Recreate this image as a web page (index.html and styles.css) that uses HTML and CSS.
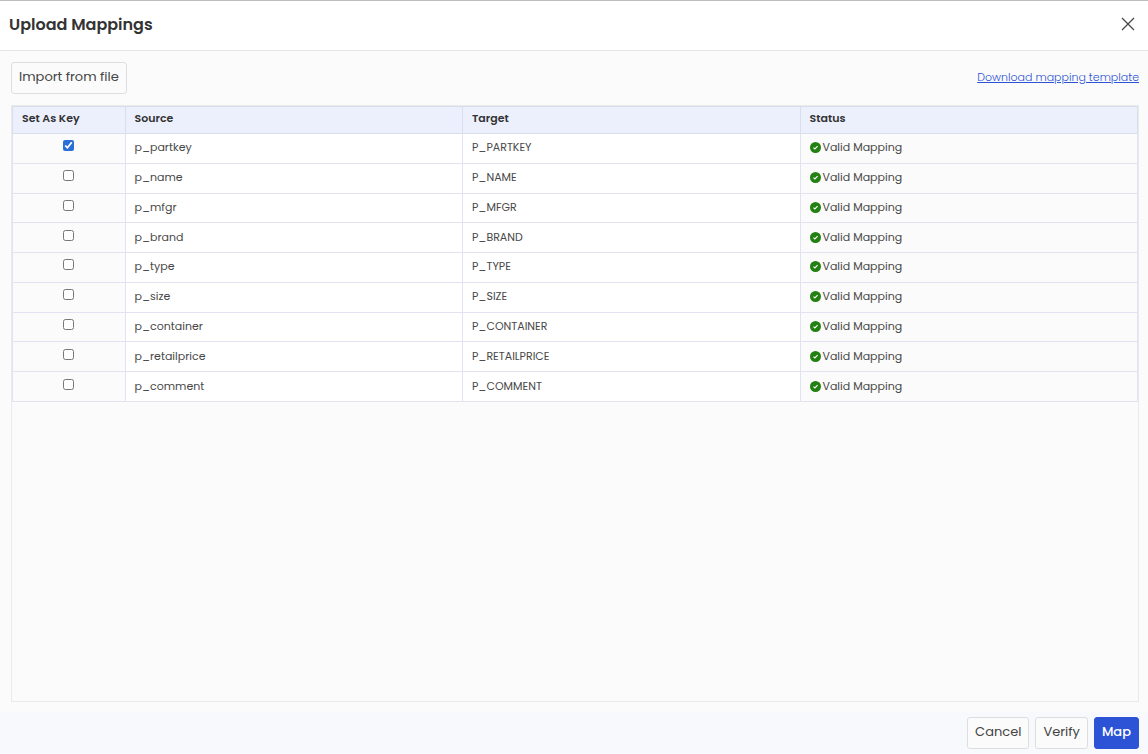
FILE: index.html
```html
<!doctype html>
<html lang="en">
  <head>
    <meta charset="utf-8">
    <title>Upload Mappings</title>
    <link rel="stylesheet" href="styles.css">
  </head>
  <body>
    <svg class="sprite" aria-hidden="true">
      <symbol id="check" viewBox="0 0 12 12">
        <circle cx="6" cy="6" r="6" fill="#238012"/>
        <path d="M3.8 6.2l1.5 1.4 3-3" fill="none" stroke="#fff" stroke-width="1.2"/>
      </symbol>
    </svg>

    <div class="modal">
      <header class="modal-header">
        <h1>Upload Mappings</h1>
        <button type="button" class="close" aria-label="Close">
          <svg width="14" height="14" viewBox="0 0 14 14"><path d="M1 1l12 12M13 1L1 13" fill="none" stroke="#444" stroke-width="1.2"/></svg>
        </button>
      </header>

      <main class="modal-body">
        <div class="toolbar">
          <button type="button" class="btn">Import from file</button>
          <a href="#template" class="template">Download mapping template</a>
        </div>

        <div class="table-wrap">
          <table class="mappings">
            <thead>
              <tr><th class="key">Set As Key</th><th>Source</th><th>Target</th><th>Status</th></tr>
            </thead>
            <tbody>
              <tr>
                <td class="key"><input type="checkbox" aria-label="p_partkey" checked></td>
                <td class="name">p_partkey</td>
                <td class="name">P_PARTKEY</td>
                <td><span class="status"><svg><use href="#check"/></svg>Valid Mapping</span></td>
              </tr>
              <tr>
                <td class="key"><input type="checkbox" aria-label="p_name"></td>
                <td class="name">p_name</td>
                <td class="name">P_NAME</td>
                <td><span class="status"><svg><use href="#check"/></svg>Valid Mapping</span></td>
              </tr>
              <tr>
                <td class="key"><input type="checkbox" aria-label="p_mfgr"></td>
                <td class="name">p_mfgr</td>
                <td class="name">P_MFGR</td>
                <td><span class="status"><svg><use href="#check"/></svg>Valid Mapping</span></td>
              </tr>
              <tr>
                <td class="key"><input type="checkbox" aria-label="p_brand"></td>
                <td class="name">p_brand</td>
                <td class="name">P_BRAND</td>
                <td><span class="status"><svg><use href="#check"/></svg>Valid Mapping</span></td>
              </tr>
              <tr>
                <td class="key"><input type="checkbox" aria-label="p_type"></td>
                <td class="name">p_type</td>
                <td class="name">P_TYPE</td>
                <td><span class="status"><svg><use href="#check"/></svg>Valid Mapping</span></td>
              </tr>
              <tr>
                <td class="key"><input type="checkbox" aria-label="p_size"></td>
                <td class="name">p_size</td>
                <td class="name">P_SIZE</td>
                <td><span class="status"><svg><use href="#check"/></svg>Valid Mapping</span></td>
              </tr>
              <tr>
                <td class="key"><input type="checkbox" aria-label="p_container"></td>
                <td class="name">p_container</td>
                <td class="name">P_CONTAINER</td>
                <td><span class="status"><svg><use href="#check"/></svg>Valid Mapping</span></td>
              </tr>
              <tr>
                <td class="key"><input type="checkbox" aria-label="p_retailprice"></td>
                <td class="name">p_retailprice</td>
                <td class="name">P_RETAILPRICE</td>
                <td><span class="status"><svg><use href="#check"/></svg>Valid Mapping</span></td>
              </tr>
              <tr>
                <td class="key"><input type="checkbox" aria-label="p_comment"></td>
                <td class="name">p_comment</td>
                <td class="name">P_COMMENT</td>
                <td><span class="status"><svg><use href="#check"/></svg>Valid Mapping</span></td>
              </tr>
            </tbody>
          </table>
        </div>
      </main>

      <footer class="modal-footer">
        <button type="button" class="btn">Cancel</button>
        <button type="button" class="btn">Verify</button>
        <button type="button" class="btn primary">Map</button>
      </footer>
    </div>
  </body>
</html>
```
FILE: styles.css
```css
* {
  box-sizing: border-box;
}
body {
  margin: 0;
  font-family: Poppins, Inter, sans-serif;
  font-size: 11px;
  color: #484848;
  background: #fbfbfb;
}
.sprite {
  display: none;
}
.modal {
  display: flex;
  flex-direction: column;
  min-height: 100vh;
  border-top: 1px solid #bdbdbd;
}
.modal-header {
  display: flex;
  align-items: center;
  justify-content: space-between;
  height: 50px;
  padding: 0 12px 4px 9px;
  background: #fff;
  border-bottom: 1px solid #e5e6e8;
}
h1 {
  margin: 2px 0 0;
  font-size: 16px;
  font-weight: 600;
  color: #333;
}
.close {
  display: flex;
  padding: 1px;
  border: 0;
  background: none;
}
.modal-body {
  flex: 1;
  display: flex;
  flex-direction: column;
  padding: 11px 9px 10px 11px;
}
.toolbar {
  display: flex;
  align-items: center;
  justify-content: space-between;
  margin-bottom: 11px;
}
.btn {
  height: 32px;
  padding: 0 7px 2px;
  font-family: inherit;
  font-size: 13px;
  color: #444;
  background: #fbfbfb;
  border: 1px solid #dcdee2;
  border-radius: 3px;
}
.template {
  padding-bottom: 2px;
  font-weight: 300;
  color: #2c53d5;
}
.table-wrap {
  flex: 1;
  border: 1px solid #e9eaec;
}
.mappings {
  width: 100%;
  height: 296px;
  table-layout: fixed;
  border-collapse: collapse;
}
.mappings th,
.mappings td {
  padding: 0 9px 1px;
  text-align: left;
  border: 1px solid #e1e4f0;
}
.mappings th {
  height: 27px;
  padding-bottom: 3px;
  font-weight: 600;
  color: #333;
  background: #ecf0fd;
  border-color: #d8deeb;
}
.mappings th.key {
  width: 10%;
}
.mappings td.key {
  padding-bottom: 5px;
  text-align: center;
}
.mappings .name {
  background: #fff;
}
.key input {
  display: block;
  width: 11px;
  height: 11px;
  margin: 0 auto;
  accent-color: #2a6fd6;
}
.status {
  display: flex;
  align-items: center;
  gap: 2px;
}
.status svg {
  width: 11px;
  height: 11px;
}
.modal-footer {
  display: flex;
  justify-content: flex-end;
  gap: 6px;
  padding: 5px 9px;
  background: #f7f9fc;
}
.modal-footer .primary {
  color: #fff;
  font-weight: 500;
  background: #2c53d5;
  border-color: #2c53d5;
}
```
